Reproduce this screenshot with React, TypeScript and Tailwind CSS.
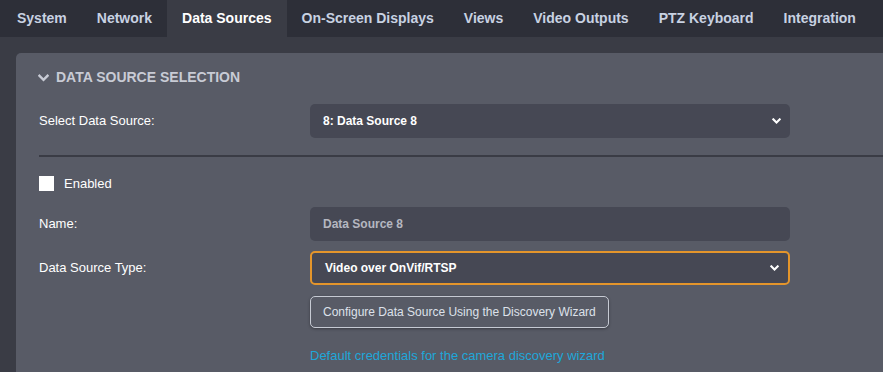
import { useState } from "react";

const tabs = [
  "System",
  "Network",
  "Data Sources",
  "On-Screen Displays",
  "Views",
  "Video Outputs",
  "PTZ Keyboard",
  "Integration",
];

function Chevron({ className = "" }: { className?: string }) {
  return (
    <svg width="11" height="8" viewBox="0 0 11 8" className={className}>
      <path
        d="M1.5 1.8 L5.5 5.8 L9.5 1.8"
        fill="none"
        stroke="currentColor"
        strokeWidth="2.4"
        strokeLinecap="square"
      />
    </svg>
  );
}

// smaller caret used inside the select boxes
function Caret() {
  return (
    <svg width="9" height="6" viewBox="0 0 9 6" className="text-white">
      <path
        d="M1.3 1.3 L4.5 4.5 L7.7 1.3"
        fill="none"
        stroke="currentColor"
        strokeWidth="2"
        strokeLinecap="square"
      />
    </svg>
  );
}

function SelectBox({ value, focused = false }: { value: string; focused?: boolean }) {
  return (
    <div
      className={`flex h-[34px] w-[480px] items-center justify-between rounded-[5px] bg-[#464854] pl-[13px] pr-[9px] text-[12px] font-bold text-white ${
        focused ? "border-2 border-[#e4952b] pl-[11px] pr-[7px]" : ""
      }`}
    >
      <span>{value}</span>
      <Caret />
    </div>
  );
}

export default function App() {
  const [enabled, setEnabled] = useState(false);

  return (
    <div className="h-[372px] w-[883px] overflow-hidden bg-[#3a3c45] font-['Liberation_Sans',Arial,sans-serif]">
      <nav className="flex h-[37px] bg-[#2d2f38] pl-[2px]">
        {tabs.map((tab) => (
          <div
            key={tab}
            className={`flex items-center px-[15px] text-[14px] font-bold ${
              tab === "Data Sources"
                ? "bg-[#3a3c45] text-white"
                : "text-[#c8d2e2]"
            }`}
          >
            {tab}
          </div>
        ))}
      </nav>

      <div className="pl-4 pt-4">
        <section className="w-[900px] rounded-tl-[5px] bg-[#585b66] pl-[23px] pt-[14px] pb-6">
          <div className="-ml-[1px] flex items-center gap-[7px] text-[14px] font-bold uppercase text-[#c8cbd5]">
            <Chevron className="text-[#c8cbd5]" />
            <span>Data Source Selection</span>
          </div>

          <div className="mt-[16px] flex items-center">
            <label className="w-[271px] text-[13px] text-white">Select Data Source:</label>
            <SelectBox value="8: Data Source 8" />
          </div>

          <div className="mt-[17px] h-[2px] bg-[#3a3c45]" />

          <label className="mt-[17px] flex items-center gap-[10px] text-[13px] text-white">
            <button
              type="button"
              onClick={() => setEnabled(!enabled)}
              className="h-[15px] w-[15px] bg-white"
            />
            Enabled
          </label>

          <div className="mt-[13px] flex items-center">
            <label className="w-[271px] text-[13px] text-white">Name:</label>
            <div className="flex h-[34px] w-[480px] items-center rounded-[5px] bg-[#464854] pl-[13px] text-[12px] font-bold text-[#b5b7c0]">
              Data Source 8
            </div>
          </div>

          <div className="mt-[10px] flex items-center">
            <label className="w-[271px] text-[13px] text-white">Data Source Type:</label>
            <SelectBox value="Video over OnVif/RTSP" focused />
          </div>

          <div className="ml-[271px] mt-[11px] flex flex-col items-start">
            <button
              type="button"
              className="h-[32px] rounded-[5px] border border-[#c6cad3] px-[12px] text-[12px] text-[#dde1ea] shadow-[0_1px_3px_rgba(0,0,0,0.35)]"
            >
              Configure Data Source Using the Discovery Wizard
            </button>
            <a className="mt-[18px] text-[13px] text-[#1ea7d9]">
              Default credentials for the camera discovery wizard
            </a>
          </div>
        </section>
      </div>
    </div>
  );
}
